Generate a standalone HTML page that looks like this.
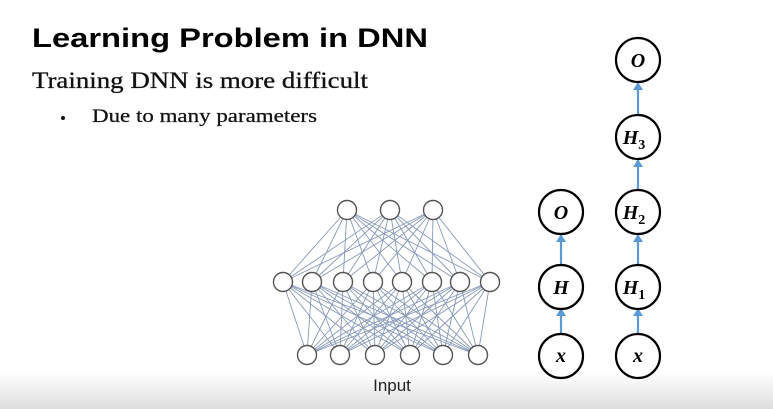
<!DOCTYPE html>
<html><head><meta charset="utf-8"><style>
html,body{margin:0;padding:0;width:773px;height:409px;overflow:hidden;background:#fff}
</style></head><body>
<svg width="773" height="409" viewBox="0 0 773 409" xmlns="http://www.w3.org/2000/svg">
<defs><linearGradient id="g" x1="0" y1="0" x2="0" y2="1"><stop offset="0" stop-color="#fff"/><stop offset="1" stop-color="#dedede"/></linearGradient></defs>
<rect x="0" y="372" width="773" height="37" fill="url(#g)"/>
<text x="32" y="47" font-family="Liberation Sans, sans-serif" font-weight="bold" font-size="27" fill="#000" textLength="396" lengthAdjust="spacingAndGlyphs">Learning Problem in DNN</text>
<text x="32" y="88" font-family="Liberation Serif, serif" font-size="23" fill="#111" stroke="#111" stroke-width="0.3" textLength="336" lengthAdjust="spacingAndGlyphs">Training DNN is more difficult</text>
<circle cx="63" cy="118" r="2" fill="#111"/>
<text x="92" y="122" font-family="Liberation Serif, serif" font-size="19" fill="#111" stroke="#111" stroke-width="0.25" textLength="225" lengthAdjust="spacingAndGlyphs">Due to many parameters</text>
<g id="net" stroke="#7387ad" stroke-width="0.9" opacity="0.85"></g>
<g id="nodes" fill="#fff" stroke="#555" stroke-width="1.4"></g>
<text x="392" y="391" text-anchor="middle" font-family="Liberation Sans, sans-serif" font-size="17" fill="#222">Input</text>
<g stroke="#5b9bd5" stroke-width="2.2" fill="#5b9bd5">
<line x1="561" y1="333" x2="561" y2="314"/><path d="M556 316 L561 308 L566 316Z" stroke="none"/>
<line x1="561" y1="264" x2="561" y2="240"/><path d="M556 242 L561 234 L566 242Z" stroke="none"/>
<line x1="638" y1="333" x2="638" y2="314"/><path d="M633 316 L638 308 L643 316Z" stroke="none"/>
<line x1="638" y1="264" x2="638" y2="240"/><path d="M633 242 L638 234 L643 242Z" stroke="none"/>
<line x1="638" y1="189" x2="638" y2="165"/><path d="M633 167 L638 159 L643 167Z" stroke="none"/>
<line x1="638" y1="114" x2="638" y2="88"/><path d="M633 90 L638 82 L643 90Z" stroke="none"/>
</g>
<g fill="#fff" stroke="#000" stroke-width="2.2">
<circle cx="561" cy="212" r="22"/><circle cx="561" cy="287" r="22"/><circle cx="561" cy="356" r="22"/>
<circle cx="638" cy="60" r="22"/><circle cx="638" cy="137" r="22"/><circle cx="638" cy="212" r="22"/><circle cx="638" cy="287" r="22"/><circle cx="638" cy="356" r="22"/>
</g>
<g font-family="Liberation Serif, serif" font-style="italic" font-weight="bold" font-size="20" fill="#000" text-anchor="middle">
<text x="561" y="219">O</text><text x="561" y="294">H</text><text x="561" y="362">x</text>
<text x="638" y="67">O</text>
<text x="634" y="144">H<tspan font-size="14" dy="5" font-style="normal">3</tspan></text>
<text x="634" y="219">H<tspan font-size="14" dy="5" font-style="normal">2</tspan></text>
<text x="634" y="294">H<tspan font-size="14" dy="5" font-style="normal">1</tspan></text>
<text x="638" y="362">x</text>
</g>
</svg>
<script>
(function(){
var ns="http://www.w3.org/2000/svg";
var t=[347,390,433].map(function(x){return [x,210];});
var m=[283,312,343,373,402,432,460,490].map(function(x){return [x,282];});
var b=[307,340,375,410,443,478].map(function(x){return [x,355];});
var net=document.getElementById('net'),nodes=document.getElementById('nodes');
function L(p,q){var l=document.createElementNS(ns,'line');l.setAttribute('x1',p[0]);l.setAttribute('y1',p[1]);l.setAttribute('x2',q[0]);l.setAttribute('y2',q[1]);net.appendChild(l);}
t.forEach(function(p){m.forEach(function(q){L(p,q);});});
m.forEach(function(p){b.forEach(function(q){L(p,q);});});
t.concat(m,b).forEach(function(p){var c=document.createElementNS(ns,'circle');c.setAttribute('cx',p[0]);c.setAttribute('cy',p[1]);c.setAttribute('r',9.5);nodes.appendChild(c);});
})();
</script>
</body></html>
